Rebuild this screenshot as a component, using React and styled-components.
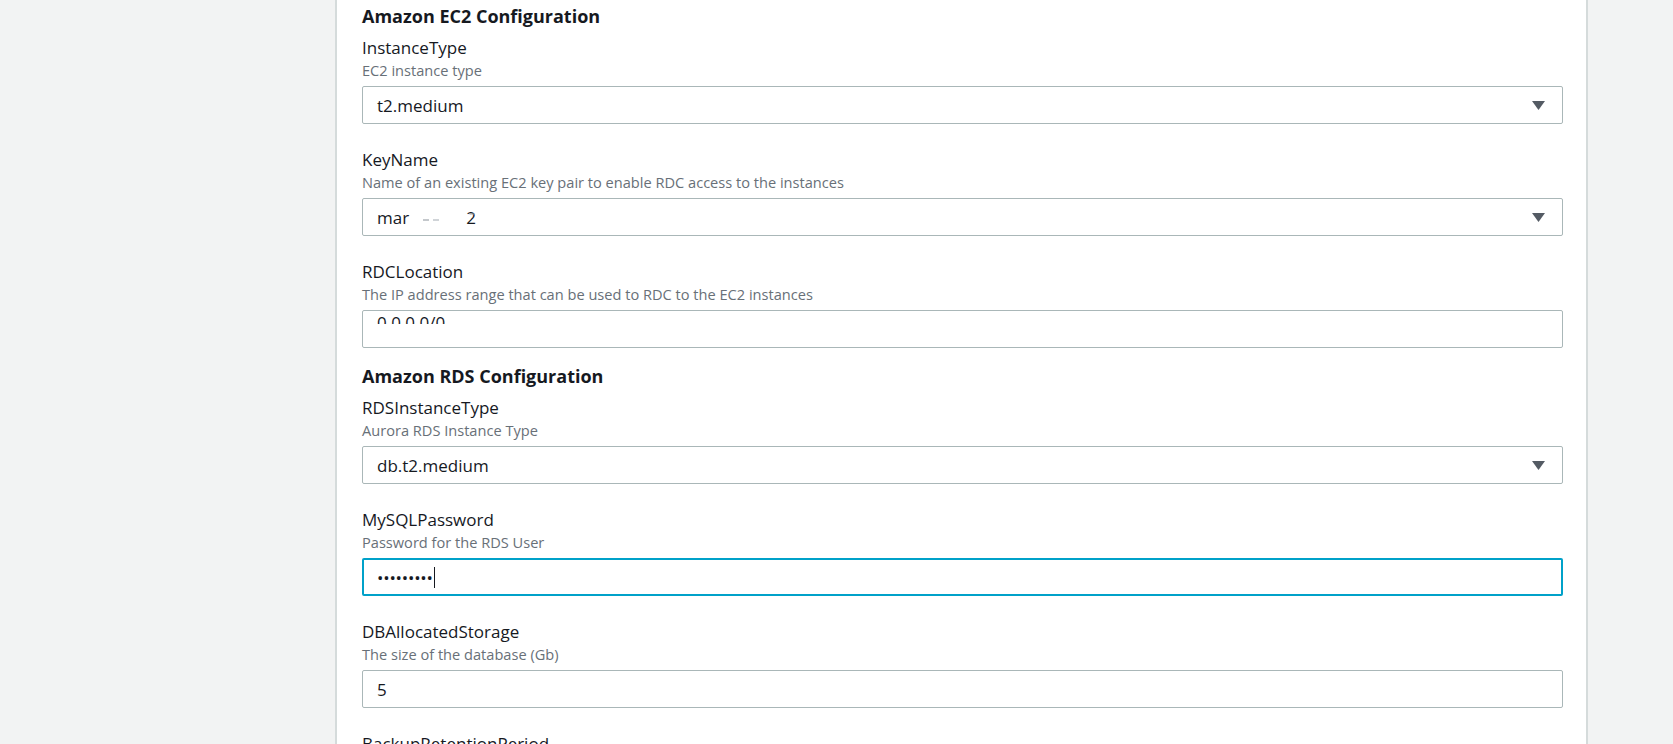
import styled, { createGlobalStyle } from 'styled-components';

const GlobalStyle = createGlobalStyle`
  html, body {
    margin: 0;
    padding: 0;
    background: #f2f3f3;
    font-family: "Open Sans", "Liberation Sans", Arial, sans-serif;
    color: #16191f;
  }
`;

const Page = styled.div`
  display: grid;
  grid-template-columns: 335px 1253px 1fr;
  height: 744px;
  overflow: hidden;
`;

const Panel = styled.div`
  grid-column: 2;
  background: #fff;
  border-left: 2px solid #d5dbdb;
  border-right: 2px solid #d5dbdb;
  padding: 5px 23px 0 25px;
  display: flex;
  flex-direction: column;
  gap: 17px;
`;

const Section = styled.section`
  display: flex;
  flex-direction: column;
`;

const Heading = styled.h2`
  margin: 0 0 9px;
  font-size: 18px;
  line-height: 22px;
  font-weight: 700;
`;

const Field = styled.div`
  display: flex;
  flex-direction: column;
  margin-bottom: ${p => (p.$last ? '0' : '24px')};
`;

const Label = styled.div`
  font-size: 17px;
  line-height: 24px;
`;

const Hint = styled.div`
  font-size: 14.6px;
  line-height: 20px;
  color: #687078;
  margin-bottom: 6px;
`;

const Box = styled.div`
  position: relative;
  height: 38px;
  box-sizing: border-box;
  border: ${p => (p.$focused ? '2px solid #00a1c9' : '1px solid #aab7b8')};
  border-radius: 2px;
  padding: 0 ${p => (p.$focused ? '13px' : '14px')};
  display: flex;
  align-items: center;
  font-size: 17px;
  overflow: hidden;
`;

const Value = styled.span`
  flex: 1;
  white-space: nowrap;
  display: flex;
  align-items: center;
`;

const Caret = styled.svg`
  width: 13px;
  height: 9px;
  margin-right: 3px;
  fill: #545b64;
`;

// scrolled single-line value, only the top of the glyphs shows
const Clipped = styled.span`
  display: block;
  height: 7px;
  overflow: hidden;
  margin-top: 6px;
  line-height: 22px;
  align-self: flex-start;
  & > span {
    display: block;
    margin-top: -5px;
  }
`;

// masked part of the key pair name
const Redacted = styled.span`
  position: relative;
  display: inline-block;
  width: 57px;
  height: 22px;
  &::before {
    content: "";
    position: absolute;
    left: 14px;
    top: 13px;
    width: 6px;
    height: 2px;
    background: #c4c8cc;
    box-shadow: 10px 0 0 #d0d4d8, 46px -6px 0 -0.5px #9aa0a6;
  }
`;

const Dots = styled.span`
  font-size: 17px;
  letter-spacing: -0.2px;
`;

const TextCursor = styled.span`
  display: inline-block;
  width: 1px;
  height: 21px;
  background: #16191f;
  margin-left: 1px;
`;

function Select({ children }) {
  return (
    <Box>
      <Value>{children}</Value>
      <Caret viewBox="0 0 13 9">
        <path d="M0 0h13L6.5 9z" />
      </Caret>
    </Box>
  );
}

function App() {
  return (
    <>
      <GlobalStyle />
      <Page>
        <Panel>
          <Section>
            <Heading>Amazon EC2 Configuration</Heading>
            <Field>
              <Label>InstanceType</Label>
              <Hint>EC2 instance type</Hint>
              <Select>t2.medium</Select>
            </Field>
            <Field>
              <Label>KeyName</Label>
              <Hint>Name of an existing EC2 key pair to enable RDC access to the instances</Hint>
              <Select>
                mar
                <Redacted />
                2
              </Select>
            </Field>
            <Field $last>
              <Label>RDCLocation</Label>
              <Hint>The IP address range that can be used to RDC to the EC2 instances</Hint>
              <Box>
                <Clipped>
                  <span>0.0.0.0/0</span>
                </Clipped>
              </Box>
            </Field>
          </Section>
          <Section>
            <Heading>Amazon RDS Configuration</Heading>
            <Field>
              <Label>RDSInstanceType</Label>
              <Hint>Aurora RDS Instance Type</Hint>
              <Select>db.t2.medium</Select>
            </Field>
            <Field>
              <Label>MySQLPassword</Label>
              <Hint>Password for the RDS User</Hint>
              <Box $focused>
                <Value>
                  <Dots>•••••••••</Dots>
                  <TextCursor />
                </Value>
              </Box>
            </Field>
            <Field>
              <Label>DBAllocatedStorage</Label>
              <Hint>The size of the database (Gb)</Hint>
              <Box>
                <Value>5</Value>
              </Box>
            </Field>
            <Field>
              <Label>BackupRetentionPeriod</Label>
            </Field>
          </Section>
        </Panel>
      </Page>
    </>
  );
}

export default App;
